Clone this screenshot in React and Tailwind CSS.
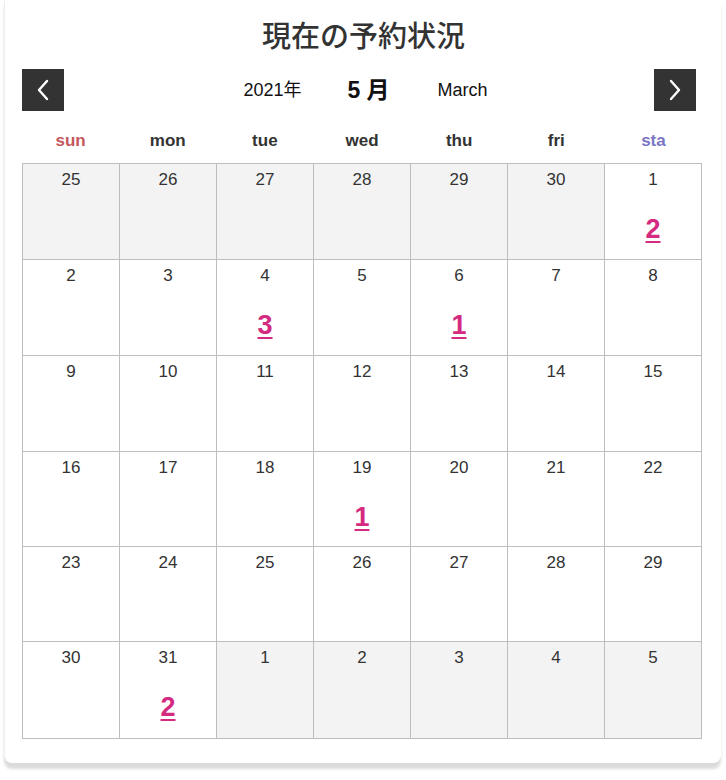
import React from "react";

const weeks = [
  [
    { d: 25, o: true }, { d: 26, o: true }, { d: 27, o: true }, { d: 28, o: true },
    { d: 29, o: true }, { d: 30, o: true }, { d: 1, c: 2 },
  ],
  [
    { d: 2 }, { d: 3 }, { d: 4, c: 3 }, { d: 5 }, { d: 6, c: 1 }, { d: 7 }, { d: 8 },
  ],
  [
    { d: 9 }, { d: 10 }, { d: 11 }, { d: 12 }, { d: 13 }, { d: 14 }, { d: 15 },
  ],
  [
    { d: 16 }, { d: 17 }, { d: 18 }, { d: 19, c: 1 }, { d: 20 }, { d: 21 }, { d: 22 },
  ],
  [
    { d: 23 }, { d: 24 }, { d: 25 }, { d: 26 }, { d: 27 }, { d: 28 }, { d: 29 },
  ],
  [
    { d: 30 }, { d: 31, c: 2 }, { d: 1, o: true }, { d: 2, o: true },
    { d: 3, o: true }, { d: 4, o: true }, { d: 5, o: true },
  ],
];

const rowH = ["h-[96px]", "h-[96px]", "h-[96px]", "h-[95px]", "h-[95px]", "h-[97px]"];

const days = [
  { t: "sun", cls: "text-[#c4585c]" },
  { t: "mon", cls: "text-[#333333]" },
  { t: "tue", cls: "text-[#333333]" },
  { t: "wed", cls: "text-[#333333]" },
  { t: "thu", cls: "text-[#333333]" },
  { t: "fri", cls: "text-[#333333]" },
  { t: "sta", cls: "text-[#7a76c4]" },
];

function Chevron({ dir }) {
  return (
    <svg width="14" height="22" viewBox="0 0 14 22" fill="none">
      {dir === "left" ? (
        <polyline points="11,2 3,11 11,20" stroke="white" strokeWidth="2.4" strokeLinecap="round" strokeLinejoin="round" />
      ) : (
        <polyline points="3,2 11,11 3,20" stroke="white" strokeWidth="2.4" strokeLinecap="round" strokeLinejoin="round" />
      )}
    </svg>
  );
}

export default function App() {
  return (
    <div className="bg-white w-[726px] h-[780px] font-['Liberation_Sans','Noto_Sans_CJK_JP',sans-serif]">
      <div className="ml-[4px] w-[717px] bg-white rounded-b-[8px] border-l border-[#eeeeee] shadow-[0_6px_3px_rgba(0,0,0,0.14)] pt-[15px] pl-[17px] pr-[19px] pb-[24px]">
        <h1 className="h-[38px] leading-[38px] text-center text-[29px] font-medium text-[#333333] font-['Noto_Sans_CJK_JP',sans-serif] pl-[3px]">
          現在の予約状況
        </h1>
        <div className="mt-[16px] h-[42px] flex items-center justify-between pr-[6px]">
          <button className="w-[42px] h-[42px] bg-[#333333] flex items-center justify-center">
            <Chevron dir="left" />
          </button>
          <div className="flex items-center text-[#111111] pl-[13px]">
            <span className="text-[18px]">2021年</span>
            <span className="ml-[46px] text-[23px] font-bold">5 月</span>
            <span className="ml-[48px] text-[18px]">March</span>
          </div>
          <button className="w-[42px] h-[42px] bg-[#333333] flex items-center justify-center">
            <Chevron dir="right" />
          </button>
        </div>
        <div className="grid grid-cols-7 h-[52px] items-end pb-[13px]">
          {days.map((d) => (
            <div key={d.t} className={`text-center text-[17px] font-bold leading-[18px] ${d.cls}`}>
              {d.t}
            </div>
          ))}
        </div>
        <div className="border-l border-t border-[#bdbdbd] w-[680px]">
          {weeks.map((w, r) => (
            <div key={r} className="grid grid-cols-[repeat(7,97px)]">
              {w.map((c, i) => (
                <div
                  key={i}
                  className={`${rowH[r]} border-r border-b border-[#bdbdbd] flex flex-col items-center ${c.o ? "bg-[#f3f3f3]" : "bg-white"}`}
                >
                  <div className="mt-[6px] text-[17px] leading-[20px] text-[#333333]">{c.d}</div>
                  {c.c ? (
                    <a className="mt-[24px] text-[27px] leading-[30px] font-bold text-[#d42a80] underline underline-offset-[3px] decoration-[2px]">
                      {c.c}
                    </a>
                  ) : null}
                </div>
              ))}
            </div>
          ))}
        </div>
      </div>
    </div>
  );
}
